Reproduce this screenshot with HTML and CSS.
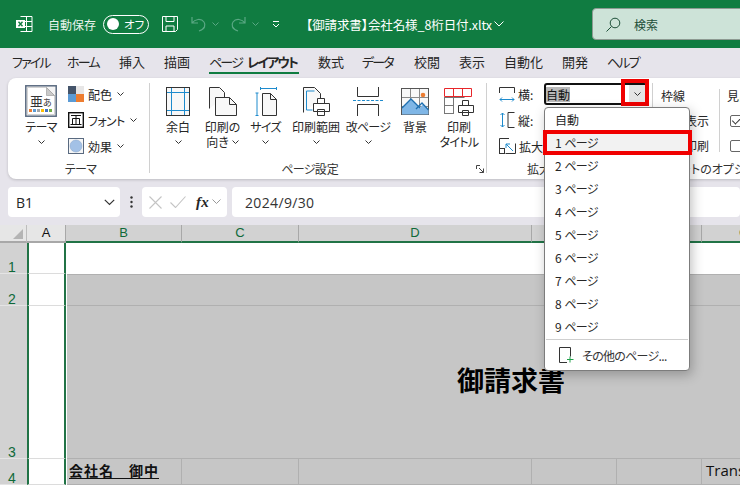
FILE: index.html
```html
<!DOCTYPE html>
<html lang="ja">
<head>
<meta charset="utf-8">
<title>Excel</title>
<link rel="stylesheet" href="styles.css">
</head>
<body>
<div class="app">
  <header class="titlebar">
    <svg class="logo" width="17" height="18" viewBox="0 0 17 18"><path d="M4.500 1.500h11.500v15h-11.500M4.500 6.500h11.500M4.500 11.500h11.500M10.500 1.500v15" fill="none" stroke="#fff"/><rect x="0" y="5" width="9" height="8" fill="#fff"/><path d="M2.500 6.800l4 4.500M6.500 6.800l-4 4.500" stroke="#107c41" stroke-width="1.400"/></svg>
    <span class="autosave">自動保存</span>
    <span class="toggle"><i class="knob"></i><span>オフ</span></span>
    <svg class="save" width="16" height="16" viewBox="0 0 16 16" fill="none" stroke="#fff"><path d="M.500.500h15v13l-2 2h-13zM4 .500v5h8v-5M4 15.500v-5.500h8v5.500"/></svg>
    <svg class="undo" width="16" height="16" viewBox="0 0 16 16" fill="none" stroke="#5aa884" stroke-width="1.200"><path d="M1 1v6h6M1 7c3-4 9-5 12-1 2 3 1 7-5 9"/></svg>
    <svg class="chev-sm" width="7" height="5" viewBox="0 0 7 5" fill="none" stroke="#5aa884"><path d="M.500.500l3 3 3-3"/></svg>
    <svg class="redo" width="16" height="16" viewBox="0 0 16 16" fill="none" stroke="#5aa884" stroke-width="1.200"><path d="M15 1v6h-6M15 7c-3-4-9-5-12-1-2 3-1 7 5 9"/></svg>
    <svg class="chev-sm" width="7" height="5" viewBox="0 0 7 5" fill="none" stroke="#5aa884"><path d="M.500.500l3 3 3-3"/></svg>
    <svg class="qat" width="8" height="7" viewBox="0 0 8 7" fill="none" stroke="#fff"><path d="M1 .500h6M1 3l3 3 3-3"/></svg>
    <span class="doc">【御請求書】会社名様_8桁日付.xltx</span>
    <svg class="doc-chev" width="10" height="6" viewBox="0 0 10 6" fill="none" stroke="#fff"><path d="M.500.500l4.500 4.500 4.500-4.500"/></svg>
    <div class="search">
      <svg width="15" height="15" viewBox="0 0 15 15" fill="none" stroke="#1d4f38"><circle cx="9" cy="6" r="4.800"/><path d="M5.500 9.500l-5 5"/></svg>
      <span>検索</span>
    </div>
  </header>

  <nav class="tabs">
    <span class="tab t1 kana">ファイル</span>
    <span class="tab t2 kana">ホーム</span>
    <span class="tab t3">挿入</span>
    <span class="tab t4">描画</span>
    <span class="tab t5 active"><span class="kana">ページ</span> <b class="kana">レイアウト</b></span>
    <span class="tab t6">数式</span>
    <span class="tab t7 kana">データ</span>
    <span class="tab t8">校閲</span>
    <span class="tab t9">表示</span>
    <span class="tab t10">自動化</span>
    <span class="tab t11">開発</span>
    <span class="tab t12 kana">ヘルプ</span>
  </nav>

  <section class="ribbon">
    <div class="group g-theme">
      <div class="group-body theme-body">
        <div class="big b-theme">
          <svg class="ico" width="32" height="32" viewBox="0 0 32 32">
            <rect x=".8" y=".8" width="30.400" height="30.400" fill="#f4f4f4" stroke="#5a6a80" stroke-width="1.500"/>
            <path d="M2.500 2.500h19l8 8v19h-27z" fill="#fff" stroke="#b8b8b8" stroke-width=".6"/>
            <path d="M21.500 2.500v8h8z" fill="#c9c9c9" stroke="#888" stroke-width=".5"/>
            <text x="5" y="21" class="ico-t1">亜</text>
            <text x="18" y="21" class="ico-t2">あ</text>
            <rect x="4" y="24" width="3" height="3" fill="#ed7d31"/><rect x="8" y="24" width="3" height="3" fill="#5b9bd5"/><rect x="12" y="24" width="3" height="3" fill="#a5a5a5"/><rect x="16" y="24" width="3" height="3" fill="#ffc000"/><rect x="20" y="24" width="3" height="3" fill="#4472c4"/><rect x="24" y="24" width="3" height="3" fill="#70ad47"/>
          </svg>
          <span class="big-label kana">テーマ</span>
          <svg class="chev" width="7" height="5" viewBox="0 0 7 5"><path d="M.500.500l3 3 3-3"/></svg>
        </div>
        <div class="theme-list">
          <div class="theme-item">
            <svg width="16" height="16" viewBox="0 0 16 16"><rect width="8" height="8" fill="#44546a"/><rect x="8" width="8" height="8" fill="#e7e6e6"/><rect y="8" width="8" height="8" fill="#5b9bd5"/><rect x="8" y="8" width="8" height="8" fill="#ed7d31"/></svg>
            <span>配色</span>
            <svg class="chev" width="7" height="5" viewBox="0 0 7 5"><path d="M.500.500l3 3 3-3"/></svg>
          </div>
          <div class="theme-item">
            <svg width="16" height="16" viewBox="0 0 16 16" fill="none" stroke="#111"><rect x=".7" y=".7" width="14.600" height="14.600" fill="#fff" stroke-width="1.400"/><path d="M3 3.500h10M4.500 6.500h7v6h-7zM8 3.500v9M2.500 12.500h11"/></svg>
            <span class="kana">フォント</span>
            <svg class="chev" width="7" height="5" viewBox="0 0 7 5"><path d="M.500.500l3 3 3-3"/></svg>
          </div>
          <div class="theme-item">
            <svg width="16" height="16" viewBox="0 0 16 16"><rect x=".5" y=".5" width="15" height="15" fill="#f6f6f6" stroke="#5a6a80"/><circle cx="8" cy="8" r="6" fill="#a3c1e6" stroke="#8ba9d0" stroke-width=".6"/></svg>
            <span>効果</span>
            <svg class="chev" width="7" height="5" viewBox="0 0 7 5"><path d="M.500.500l3 3 3-3"/></svg>
          </div>
        </div>
      </div>
      <div class="group-label kana">テーマ</div>
    </div>

    <div class="group g-page">
      <div class="group-body page-body">
        <div class="big b-margin">
          <svg class="ico" width="24" height="29" viewBox="0 0 24 29" fill="none"><rect x=".5" y=".5" width="23" height="28" fill="#f8f8f8" stroke="#333"/><path d="M5.500 1v27M18.500 1v27M1 5.500h22M1 23.500h22" stroke="#1e8bcd"/></svg>
          <span class="big-label">余白</span>
          <svg class="chev" width="7" height="5" viewBox="0 0 7 5"><path d="M.500.500l3 3 3-3"/></svg>
        </div>
        <div class="big b-orient">
          <svg class="ico" width="28" height="29" viewBox="0 0 28 29" fill="none" stroke="#333"><path d="M.5 21.500v-21h10l5 5v5" fill="#f8f8f8"/><path d="M6.500 10.500h14l7 7v11h-21z" fill="#f8f8f8"/><path d="M20.500 10.500v7h7"/></svg>
          <span class="big-label">印刷の<br>向き<svg class="chev" width="7" height="5" viewBox="0 0 7 5"><path d="M.500.500l3 3 3-3"/></svg></span>
        </div>
        <div class="big b-size">
          <svg class="ico" width="22" height="29" viewBox="0 0 22 29" fill="none"><path d="M5 1.500h17M5.500 0v3M21.500 0v3M.5 6h3M2 6v23M.5 28.500h3" stroke="#1e8bcd"/><path d="M7.500 6.500h8l6 6v16h-14z" fill="#f8f8f8" stroke="#333"/><path d="M15.500 6.500v6h6" stroke="#333"/></svg>
          <span class="big-label kana">サイズ</span>
          <svg class="chev" width="7" height="5" viewBox="0 0 7 5"><path d="M.500.500l3 3 3-3"/></svg>
        </div>
        <div class="big b-area">
          <svg class="ico" width="27" height="29" viewBox="0 0 27 29" fill="none"><path d="M.5 25.500v-25h11l6 6v6h-3v2" stroke="#333" fill="#f8f8f8"/><path d="M3.500 23v-19h8" stroke="#1e8bcd"/><path d="M3.500 23h6" stroke="#1e8bcd"/><path d="M14.500 16.500v-5h7v5M10.500 16.500h16v8h-16zM14.500 22.500h7v6h-7z" stroke="#333" fill="#fff"/></svg>
          <span class="big-label">印刷範囲</span>
          <svg class="chev" width="7" height="5" viewBox="0 0 7 5"><path d="M.500.500l3 3 3-3"/></svg>
        </div>
        <div class="big b-break">
          <svg class="ico" width="30" height="29" viewBox="0 0 30 29" fill="none"><path d="M4.500 0v9.500h21v-9.500M4.500 29v-11.500h21v11.500" stroke="#333"/><path d="M0 13.500h30" stroke="#1e8bcd" stroke-dasharray="3 1.500"/></svg>
          <span class="big-label kana">改ページ</span>
          <svg class="chev" width="7" height="5" viewBox="0 0 7 5"><path d="M.500.500l3 3 3-3"/></svg>
        </div>
        <div class="big b-bg">
          <svg class="ico" width="28" height="29" viewBox="0 0 28 29" fill="none"><rect x=".5" y="1.500" width="27" height="26" fill="#f8f8f8" stroke="#555"/><path d="M9.500 2v25M18.500 2v25M1 10.500h26M1 19.500h26" stroke="#8a8a8a"/><circle cx="22" cy="8" r="2.300" fill="#ed7d31"/><path d="M1 21l9-9 9 9 3-4 5.500 6v4.500h-26.500z" fill="#7fb6e6"/><path d="M1 21l9-9 9 9M15 22l6-6 6.500 7" stroke="#1e6fb0" stroke-width="1.300"/></svg>
          <span class="big-label">背景</span>
        </div>
        <div class="big b-titles">
          <svg class="ico" width="30" height="29" viewBox="0 0 30 29" fill="none"><path d="M.5 10.500h20M.5 18.500h9M.5 26.500h9M.5 10v17M9.500 10v17" stroke="#777"/><path d="M.5 1.500h27v8h-27zM9.500 1.500v8M18.500 1.500v8" stroke="#e8262a" fill="#fff"/><path d="M18.500 18.500v-5h6v5M14.500 18.500h15v7h-15zM18.500 23.500h6v5h-6z" stroke="#333" fill="#fff"/></svg>
          <span class="big-label">印刷<br><span class="kana">タイトル</span></span>
        </div>
      </div>
      <div class="group-label"><span class="kana">ページ</span>設定
        <svg class="launcher" width="8" height="8" viewBox="0 0 8 8" fill="none" stroke="#444"><path d="M.500 4v-3.500h3.500M3 3l4.500 4.500M7.500 3.500v4h-4"/></svg>
      </div>
    </div>

    <div class="group g-scale">
      <div class="scale-rows">
        <div class="scale-row">
          <svg class="scale-ico" width="16" height="15" viewBox="0 0 16 15" fill="none"><path d="M.5 6v-5.500h15v5.500" stroke="#333"/><path d="M1 12.500h14M3 10.500l-2 2 2 2M13 10.500l2 2-2 2" stroke="#1e8bcd"/></svg>
          <span class="scale-label">横:</span>
          <div class="combo"><span class="sel">自動</span>
            <div class="combo-btn"><svg class="chev" width="7" height="5" viewBox="0 0 7 5"><path d="M.500.500l3 3 3-3"/></svg></div>
          </div>
        </div>
        <div class="scale-row">
          <svg class="scale-ico" width="16" height="16" viewBox="0 0 16 16" fill="none"><path d="M3.500 1v14M1.500 3l2-2 2 2M1.500 13l2 2 2-2" stroke="#1e8bcd"/><path d="M15.500.5h-6.500v15h6.500" stroke="#333"/></svg>
          <span class="scale-label">縦:</span>
        </div>
        <div class="scale-row">
          <svg class="scale-ico" width="17" height="16" viewBox="0 0 17 16" fill="none"><path d="M.5 10v-9.500h9.500M6.500 15.500h10v-10" stroke="#333"/><path d="M14 13l-7-7M7 10v-4h4" stroke="#1e8bcd"/><rect x=".5" y="10.500" width="5" height="5" stroke="#333"/></svg>
          <span class="scale-label">拡大/縮小:</span>
        </div>
      </div>
      <div class="group-label">拡大縮小印刷</div>
    </div>

    <div class="group g-sheet">
      <div class="sheet-cols">
        <div class="sheet-col col-grid">
          <span class="sheet-head">枠線</span>
          <label class="sheet-opt"><i class="cb on"></i>表示</label>
          <label class="sheet-opt"><i class="cb"></i>印刷</label>
        </div>
        <div class="sheet-col col-head">
          <span class="sheet-head">見出し</span>
          <label class="sheet-opt"><i class="cb on"></i>表示</label>
          <label class="sheet-opt"><i class="cb"></i>印刷</label>
        </div>
      </div>
      <div class="group-label">シートのオプション</div>
    </div>
  </section>

  <section class="formula">
    <div class="namebox"><span>B1</span>
      <svg width="11" height="7" viewBox="0 0 11 7" fill="none" stroke="#333" stroke-width="1.200"><path d="M.8.800l4.700 4.700 4.700-4.700"/></svg>
    </div>
    <svg class="dots" width="3" height="12" viewBox="0 0 3 12" fill="#333"><circle cx="1.500" cy="1.500" r="1.200"/><circle cx="1.500" cy="6" r="1.200"/><circle cx="1.500" cy="10.500" r="1.200"/></svg>
    <div class="fxbox">
      <svg width="13" height="13" viewBox="0 0 13 13" fill="none" stroke="#c4c4c4" stroke-width="1.100"><path d="M.5.500l12 12M12.500.500l-12 12"/></svg>
      <svg width="16" height="12" viewBox="0 0 16 12" fill="none" stroke="#c4c4c4" stroke-width="1.100"><path d="M.5 6.500l5 5 10-11"/></svg>
      <span class="fx">fx</span>
      <svg width="9" height="6" viewBox="0 0 9 6" fill="none" stroke="#999"><path d="M.5.500l4 4 4-4"/></svg>
    </div>
    <div class="fbox">2024/9/30</div>
  </section>

  <main class="sheet">
    <div class="corner"><i></i></div>
    <div class="ch ch-a">A</div>
    <div class="ch">B</div>
    <div class="ch">C</div>
    <div class="ch">D</div>
    <div class="ch">E</div>
    <div class="ch">F</div>
    <div class="ch">G</div>
    <div class="ch ch-last"></div>

    <div class="rh">1</div><div class="a"></div><div class="span-white"></div>
    <div class="rh">2</div><div class="a"></div><div class="span-gray"></div>
    <div class="rh">3</div><div class="a"></div><div class="span-gray title-cell">御請求書</div>
    <div class="rh">4</div><div class="a"></div>
    <div class="c c-company"><u>会社名　御中</u></div>
    <div class="c"></div><div class="c"></div><div class="c"></div><div class="c"></div>
    <div class="c c-trans">Transfer</div><div class="c"></div>
  </main>

  <div class="menu">
    <div class="menu-item">自動</div>
    <div class="menu-item hot">1 <span class="kana">ページ</span></div>
    <div class="menu-item">2 <span class="kana">ページ</span></div>
    <div class="menu-item">3 <span class="kana">ページ</span></div>
    <div class="menu-item">4 <span class="kana">ページ</span></div>
    <div class="menu-item">5 <span class="kana">ページ</span></div>
    <div class="menu-item">6 <span class="kana">ページ</span></div>
    <div class="menu-item">7 <span class="kana">ページ</span></div>
    <div class="menu-item">8 <span class="kana">ページ</span></div>
    <div class="menu-item">9 <span class="kana">ページ</span></div>
    <div class="menu-sep"></div>
    <div class="menu-more">
      <svg width="15" height="16" viewBox="0 0 15 16" fill="none"><path d="M8 15.500h-7.500v-15h11v9" stroke="#333"/><path d="M11 9.500v6M8 12.500h6.500" stroke="#21a14a"/></svg>
      <span class="kana">その他のページ...</span>
    </div>
  </div>
</div>
</body>
</html>
```

FILE: styles.css
```css
* { box-sizing: border-box; }
html, body { margin: 0; padding: 0; }
body {
  width: 740px; height: 485px; overflow: hidden;
  font-family: "Noto Sans CJK JP", "Noto Sans", sans-serif;
  font-feature-settings: "palt";
  font-size: 12px; color: #262626; background: #e6e4eb;
}
.app { position: relative; width: 740px; height: 485px; overflow: hidden; }
.kana { letter-spacing: -.7px; }

/* title bar */
.titlebar { height: 48px; background: #107c41; color: #fff; display: flex; align-items: center; white-space: nowrap; padding-left: 16px; }
.autosave { margin-left: 15px; font-size: 12px; color: #eaf4ee; }
.toggle { margin-left: 7px; width: 46px; height: 19px; border: 1px solid #fff; border-radius: 10px; display: flex; align-items: center; padding-left: 3px; font-size: 11.500px; }
.knob { width: 12px; height: 12px; border-radius: 50%; background: #fff; margin-right: 5px; }
.save { margin-left: 13px; }
.undo { margin-left: 13px; }
.chev-sm { margin-left: 5px; }
.redo { margin-left: 11px; }
.titlebar .redo + .chev-sm { margin-left: 6px; }
.qat { margin-left: 13px; }
.doc { margin-left: 26px; font-size: 12.500px; letter-spacing: -.1px; }
.doc-chev { margin-left: 2px; }
.search { margin-left: auto; width: 160px; margin-right: -12px; height: 32px; background: #cde3d8; border: 1px solid #8d9a92; border-radius: 4px; display: flex; align-items: center; padding-left: 13px; color: #1d4f38; font-size: 12px; }
.search span { margin-left: 13px; }

/* tabs */
.tabs { height: 27px; display: flex; align-items: center; padding-left: 12px; white-space: nowrap; font-size: 13px; color: #262626; }
.tab { position: relative; line-height: 27px; flex: none; }
.tab.kana, .tab .kana { letter-spacing: -1.800px; }
.t1 { width: 55px; } .t2 { width: 52px; } .t3 { width: 45px; } .t4 { width: 45px; }
.t5 { width: 109px; } .t6 { width: 44px; } .t7 { width: 52px; } .t8 { width: 45px; }
.t9 { width: 45px; } .t10 { width: 58px; } .t11 { width: 45px; } .t12 { width: 40px; }
.tab b { font-weight: 700; margin-left: 2px; }
.active::after { content: ""; position: absolute; left: 0; width: 90px; bottom: 1px; height: 2px; background: #107c41; }

/* ribbon */
.ribbon { margin: 3px 0 0 8px; width: 750px; height: 101px; background: #fff; border-radius: 8px; display: flex; box-shadow: 0 1px 3px rgba(0,0,0,.18); }
.group { position: relative; display: flex; flex-direction: column; flex: none; padding-top: 5px; }
.group::after { content: ""; position: absolute; right: 0; top: 5px; bottom: 6px; width: 1px; background: #d0d0d0; }
.group-body { flex: 1; display: flex; }
.group-label { height: 18px; line-height: 16px; text-align: center; font-size: 12px; white-space: nowrap; color: #333; position: relative; }
.launcher { position: absolute; right: 3px; top: 4px; }
.g-theme { width: 142px; }
.g-page { width: 337px; }
.g-scale { width: 166px; }
.g-sheet { width: 105px; }
.g-theme .group-label { padding-left: 3px; }
.g-page .group-label { padding-right: 17px; }
.g-scale .group-label { padding-right: 14px; }

.big { display: flex; flex-direction: column; align-items: center; text-align: center; flex: none; }
.ico { margin-top: 4px; flex: none; }
.ico-t1 { font-size: 13px; fill: #333; }
.ico-t2 { font-size: 9px; fill: #333; }
.big-label { margin-top: 3px; line-height: 15px; font-size: 12px; white-space: nowrap; }
.chev { fill: none; stroke: #333; flex: none; }
.big > .chev { margin-top: 6px; }
.big-label .chev { margin-left: 3px; vertical-align: 2px; }

.theme-body { padding-left: 8px; }
.b-theme { width: 50px; margin-top: 2px; }
.b-theme .ico { margin-top: 0; }
.b-theme .big-label { margin-top: 2px; }
.theme-list { display: flex; flex-direction: column; gap: 10px; margin-left: 2px; padding-top: 3px; }
.theme-item { display: flex; align-items: center; height: 16px; gap: 4px; white-space: nowrap; }
.theme-item .chev { margin-left: 1px; }

.page-body { padding-left: 5px; }
.b-margin { width: 46px; } .b-orient { width: 43px; } .b-size { width: 43px; } .b-area { width: 58px; }
.b-break { width: 46px; } .b-bg { width: 48px; } .b-titles { width: 40px; }

.scale-rows { flex: 1; display: flex; flex-direction: column; padding-left: 12px; }
.scale-row { display: flex; align-items: center; height: 26px; white-space: nowrap; position: relative; }
.scale-row:first-child { margin-top: -2px; }
.scale-ico { flex: none; }
.scale-label { margin-left: 3px; width: 26px; }
.combo { width: 103px; height: 22px; border: 2px solid #111; border-radius: 3px; display: flex; align-items: center; justify-content: space-between; padding-left: 0; background: #fff; }
.sel { background: #b9b9b9; line-height: 15px; color: #111; font-size: 12px; }
.combo-btn { position: relative; width: 16px; height: 18px; background: #e4e4e4; display: flex; align-items: center; justify-content: center; }
.combo-btn::after { content: ""; position: absolute; left: -8px; right: -4px; top: -6px; bottom: -3px; border: 4px solid #f00000; }

.sheet-cols { flex: 1; display: flex; padding-left: 8px; }
.sheet-col { display: flex; flex-direction: column; white-space: nowrap; width: 66px; flex: none; position: relative; }
.sheet-col.col-grid::after { content: ""; position: absolute; right: 7px; top: 6px; bottom: 9px; width: 1px; background: #d0d0d0; }
.sheet-head { height: 26px; line-height: 26px; }
.sheet-opt { height: 25px; display: flex; align-items: center; margin-top: -1px; margin-bottom: 1px; }
.cb { width: 12px; height: 12px; border: 1px solid #666; border-radius: 2px; margin-right: 9px; flex: none; margin-left: 3px; position: relative; }
.cb.on::after { content: ""; position: absolute; left: 3px; top: 0; width: 4px; height: 7px; border: solid #333; border-width: 0 1px 1px 0; transform: rotate(45deg); }
.g-sheet .group-label { text-align: left; margin-left: 15px; }
.g-sheet::after { display: none; }

/* formula bar */
.formula { height: 46px; display: flex; align-items: center; padding-left: 8px; }
.namebox, .fxbox, .fbox { height: 30px; background: #fff; border-radius: 4px; display: flex; align-items: center; }
.namebox { width: 112px; padding: 0 5px 0 8px; justify-content: space-between; font-family: "Open Sans", sans-serif; font-size: 14px; }
.dots { margin: 0 9px 0 10px; }
.fxbox { width: 85px; padding-left: 7px; }
.fxbox svg:nth-child(2) { margin-left: 8px; }
.fx { font-family: "Liberation Serif", serif; font-style: italic; font-weight: 700; font-size: 15px; margin-left: 10px; letter-spacing: .3px; }
.fxbox svg:last-child { margin-left: 3px; }
.fbox { margin-left: 5px; flex: 1; padding-left: 13px; font-family: "Open Sans", sans-serif; font-size: 14px; letter-spacing: .35px; color: #333; }

/* sheet */
.sheet {
  position: absolute; left: 0; top: 225px; width: 955px; height: 260px;
  display: grid;
  grid-template-columns: 27px 39px 116px 117px 233px 85px 85px 85px 168px;
  grid-template-rows: 18px 31px 32px 153px 26px;
  background: #fff;
  font-family: "Liberation Sans", "Noto Sans CJK JP", sans-serif;
}
.corner { background: #e6e6e6; border-right: 1px solid #bdbdbd; border-bottom: 2px solid #a8a8a8; position: relative; }
.corner i { position: absolute; right: 3px; bottom: 2px; width: 0; height: 0; border-left: 10px solid transparent; border-bottom: 10px solid #b4b4b4; }
.ch { background: #d2d2d2; color: #0f6a3a; border-right: 1px solid #a8a8a8; border-bottom: 2px solid #217346; text-align: center; font-size: 13px; line-height: 16px; }
.ch-a { background: #e6e6e6; color: #111; border-bottom-color: #a8a8a8; }
.ch-last { border-right: 0; }
.rh { background: #d2d2d2; color: #0f6a3a; font-size: 14px; display: flex; align-items: flex-end; justify-content: center; padding-right: 3px; line-height: 12px; border-bottom: 1px solid #e4e4e4; }
.a { background: #fff; border-left: 2px solid #217346; border-right: 2px solid #217346; border-bottom: 1px solid #dcdcdc; }
.span-white { grid-column: 3 / -1; background: #fff; }
.span-gray { grid-column: 3 / -1; background: #c6c6c6; margin-left: 1px; border-bottom: 1px solid #b0b0b0; border-top: 1px solid #b0b0b0; }
.span-gray + .rh + .a + .span-gray { border-top: 0; }
.title-cell { display: flex; align-items: center; justify-content: center; font-family: "Noto Sans CJK JP", sans-serif; font-weight: 700; font-size: 27px; color: #000; line-height: 1; padding-bottom: 5px; }
.c { background: #c6c6c6; border-right: 1px solid #b0b0b0; border-bottom: 1px solid #b0b0b0; font-size: 14px; color: #111; white-space: nowrap; overflow: hidden; line-height: 23px; }
.c-company { margin-left: 1px; padding-left: 2px; font-family: "Noto Sans CJK JP", sans-serif; font-weight: 700; overflow: visible; letter-spacing: 1px; }
.c-company u { text-decoration-thickness: 1px; text-underline-offset: 2px; }
.c-trans { padding-left: 4px; font-size: 15px; font-family: "Open Sans", sans-serif; }

/* dropdown */
.menu { position: absolute; left: 544px; top: 107px; width: 146px; height: 264px; background: #fff; border: 1px solid #7c7c7c; border-radius: 4px; box-shadow: 2px 4px 12px rgba(0,0,0,.25); z-index: 5; display: flex; flex-direction: column; }
.menu-item { height: 23px; line-height: 23px; padding-left: 10px; font-size: 12px; color: #262626; flex: none; position: relative; }
.hot { background: #f2f2f2; }
.hot::after { content: ""; position: absolute; left: -2px; right: -3px; top: -1px; bottom: -1px; border: 4px solid #f00000; }
.menu-sep { height: 1px; background: #cfcfcf; margin: 1px 1px 0; flex: none; }
.menu-more { flex: 1; display: flex; align-items: center; padding-left: 14px; gap: 8px; font-size: 12px; color: #333; }
```
